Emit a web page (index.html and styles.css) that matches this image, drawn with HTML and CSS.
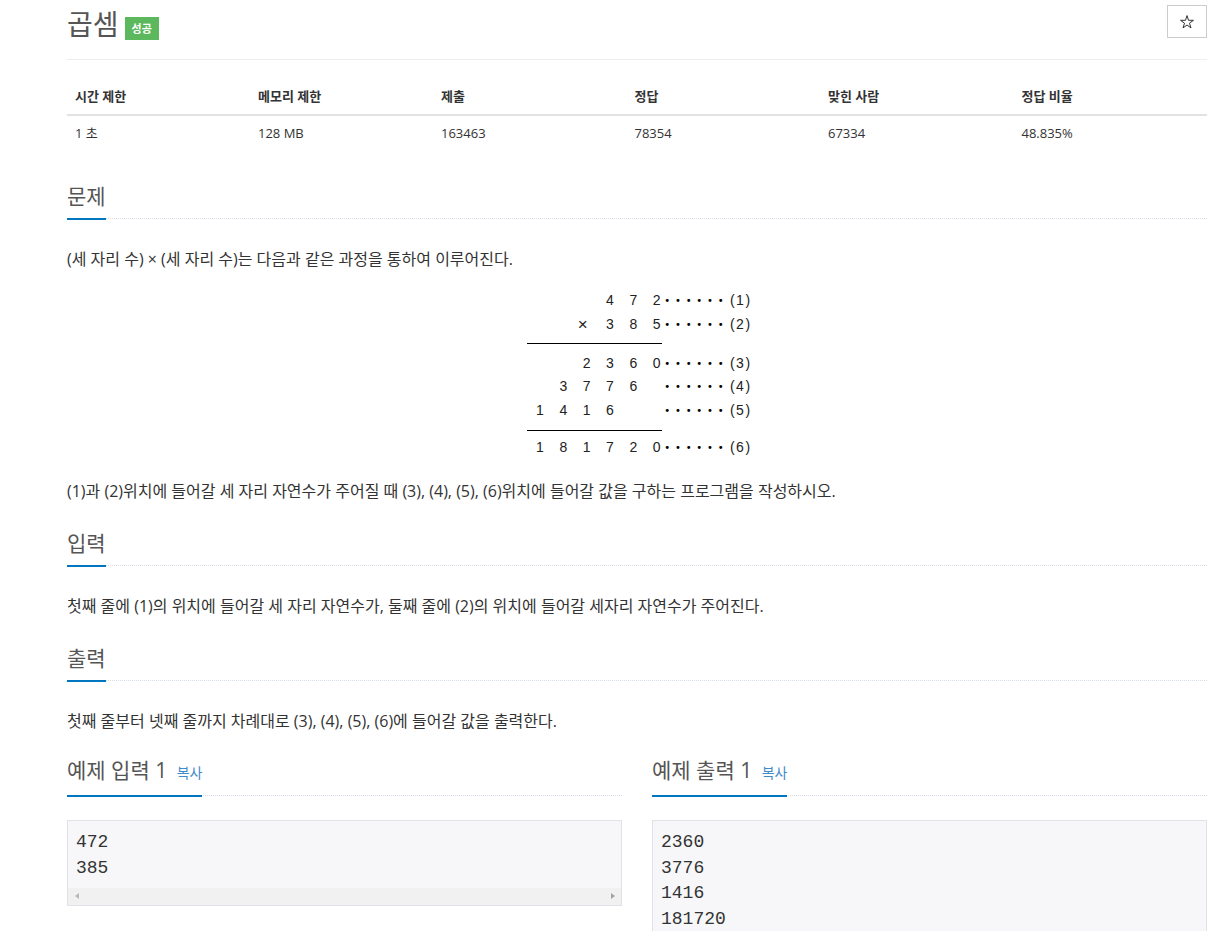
FILE: index.html
```html
<!DOCTYPE html>
<html lang="ko">
<head>
  <meta charset="UTF-8">
  <title>곱셈</title>
  <meta name="viewport" content="width=device-width, initial-scale=1.0" />
  <link rel="stylesheet" href="styles.css">
</head>
<body>
  <div class="container">
    <div class="page-header">
      <h1><span class="problem-title">곱셈</span><span class="label-success">성공</span></h1>
      <button class="star-btn" title="즐겨찾기">
        <svg width="14" height="14" viewBox="0 0 14 14"><polygon points="7,0.6 8.53,5.3 13.47,5.3 9.47,8.2 11,12.9 7,10 3,12.9 4.53,8.2 0.53,5.3 5.47,5.3" fill="none" stroke="#333" stroke-width="1" stroke-linejoin="miter"/></svg>
      </button>
    </div>

    <table class="problem-info">
      <thead>
        <tr>
          <th>시간 제한</th>
          <th>메모리 제한</th>
          <th>제출</th>
          <th>정답</th>
          <th>맞힌 사람</th>
          <th>정답 비율</th>
        </tr>
      </thead>
      <tbody>
        <tr>
          <td>1 초</td>
          <td>128 MB</td>
          <td>163463</td>
          <td>78354</td>
          <td>67334</td>
          <td>48.835%</td>
        </tr>
      </tbody>
    </table>

    <section class="problem-section">
      <div class="headline"><h2>문제</h2></div>
      <div class="problem-text">
        <p>(세 자리 수) × (세 자리 수)는 다음과 같은 과정을 통하여 이루어진다.</p>
        <!-- 곱셈 과정 그림 -->
        <div class="calc">
          <div class="calc-row"><span></span><span></span><span></span><span>4</span><span>7</span><span>2</span><span class="dots">••••••</span><span class="tag">(1)</span></div>
          <div class="calc-row"><span></span><span></span><span class="times">×</span><span>3</span><span>8</span><span>5</span><span class="dots">••••••</span><span class="tag">(2)</span></div>
          <div class="calc-rule first"></div>
          <div class="calc-row"><span></span><span></span><span>2</span><span>3</span><span>6</span><span>0</span><span class="dots">••••••</span><span class="tag">(3)</span></div>
          <div class="calc-row"><span></span><span>3</span><span>7</span><span>7</span><span>6</span><span></span><span class="dots">••••••</span><span class="tag">(4)</span></div>
          <div class="calc-row"><span>1</span><span>4</span><span>1</span><span>6</span><span></span><span></span><span class="dots">••••••</span><span class="tag">(5)</span></div>
          <div class="calc-rule second"></div>
          <div class="calc-row"><span>1</span><span>8</span><span>1</span><span>7</span><span>2</span><span>0</span><span class="dots">••••••</span><span class="tag">(6)</span></div>
        </div>
        <p>(1)과 (2)위치에 들어갈 세 자리 자연수가 주어질 때 (3), (4), (5), (6)위치에 들어갈 값을 구하는 프로그램을 작성하시오.</p>
      </div>
    </section>

    <section class="problem-section">
      <div class="headline"><h2>입력</h2></div>
      <div class="problem-text">
        <p>첫째 줄에 (1)의 위치에 들어갈 세 자리 자연수가, 둘째 줄에 (2)의 위치에 들어갈 세자리 자연수가 주어진다.</p>
      </div>
    </section>

    <section class="problem-section">
      <div class="headline"><h2>출력</h2></div>
      <div class="problem-text">
        <p>첫째 줄부터 넷째 줄까지 차례대로 (3), (4), (5), (6)에 들어갈 값을 출력한다.</p>
      </div>
    </section>

    <div class="samples">
      <section>
        <div class="headline"><h2>예제 입력 1 <a href="#" class="copy-button">복사</a></h2></div>
        <div class="sampledata">
          <pre>472
385</pre>
          <div class="hscroll"><span class="arrow arrow-left"></span><span class="arrow arrow-right"></span></div>
        </div>
      </section>
      <section>
        <div class="headline"><h2>예제 출력 1 <a href="#" class="copy-button">복사</a></h2></div>
        <div class="sampledata">
          <pre>2360
3776
1416
181720</pre>
          <div class="hscroll"><span class="arrow arrow-left"></span><span class="arrow arrow-right"></span></div>
        </div>
      </section>
    </div>
  </div>
</body>
</html>
```

FILE: styles.css
```css
body {
  margin: 0;
  font-family: "Open Sans", "Noto Sans CJK KR", sans-serif;
  color: #333;
  background: #fff;
}
.container {
  width: 1140px;
  margin-left: 67px;
}
/* 제목 */
.page-header {
  display: flex;
  justify-content: space-between;
  align-items: flex-start;
  padding-bottom: 11px;
  border-bottom: 1px solid #eee;
}
.page-header h1 {
  display: flex;
  align-items: center;
  gap: 6px;
  margin: 0;
  height: 48px;
  font-size: 28px;
  font-weight: normal;
  line-height: 48px;
  color: #555;
}
.label-success {
  margin-top: 9px;
  padding: 0 7px;
  background: #5cb85c;
  color: #fff;
  font-size: 11px;
  font-weight: bold;
  line-height: 23px;
}
.star-btn {
  margin-top: 5px;
  width: 40px;
  height: 33px;
  padding: 0;
  border: 1px solid #ccc;
  background: #fff;
  display: flex;
  align-items: center;
  justify-content: center;
  cursor: pointer;
}
/* 정보 표 */
.problem-info {
  width: 100%;
  table-layout: fixed;
  border-collapse: collapse;
  margin: 19px 0 21px;
  font-size: 13px;
  line-height: 18.57px;
}
.problem-info th,
.problem-info td {
  padding: 8px;
  text-align: left;
}
.problem-info th {
  width: 17%;
  font-weight: bold;
  border-bottom: 2px solid #e2e2e2;
}
.problem-info th:nth-child(1),
.problem-info th:nth-child(2) {
  width: 16%;
}
/* 섹션 */
.problem-section {
  padding-top: 10px;
}
.headline {
  margin: 0 0 25px;
  border-bottom: 1px dotted #d5dde8;
}
.headline h2 {
  display: inline-block;
  margin: 0 0 -2px;
  padding-bottom: 7px;
  border-bottom: 2px solid #0076c0;
  font-size: 21px;
  font-weight: normal;
  line-height: 30px;
  color: #555;
}
.copy-button {
  margin-left: 4px;
  font-size: 14px;
  color: #428bca;
  text-decoration: none;
}
.problem-text {
  font-size: 16px;
  line-height: 30px;
}
.problem-text p {
  margin: 0 0 12px;
}
/* 곱셈 그림 */
.calc {
  width: 232px;
  margin: 0 auto 17px;
  padding-top: 3px;
  font-family: "Liberation Sans", sans-serif;
  font-size: 14px;
  color: #222;
}
.calc-row {
  display: grid;
  grid-template-columns: repeat(6, 23.33px) 61.7px auto;
  align-items: center;
  height: 23.4px;
  line-height: 23.4px;
  padding-left: 7.3px;
}
.calc-row span {
  text-align: center;
}
.calc-row .times {
  font-size: 17px;
  margin-left: -8px;
}
.calc-row .dots {
  text-align: left;
  margin-left: -4px;
  font-family: "DejaVu Sans", sans-serif;
  font-size: 10px;
  letter-spacing: 4.8px;
  color: #000;
}
.calc-row .tag {
  text-align: left;
  letter-spacing: 1.5px;
}
.calc-rule {
  width: 135px;
  margin-left: 5.7px;
  border-top: 1px solid #000;
}
.calc-rule.first {
  margin-top: 7px;
  margin-bottom: 8px;
}
.calc-rule.second {
  margin-top: 7.5px;
  margin-bottom: 5.5px;
}
/* 예제 */
.samples {
  display: grid;
  grid-template-columns: 1fr 1fr;
  gap: 30px;
  padding-top: 7px;
}
.samples .headline {
  margin-bottom: 24px;
}
.sampledata {
  border: 1px solid #e1e1e8;
  background: #f7f7f9;
}
.sampledata pre {
  margin: 0;
  padding: 9px 8px 6.5px;
  font-family: "Liberation Mono", monospace;
  font-size: 18px;
  line-height: 25.5px;
  color: #333;
}
.hscroll {
  display: flex;
  justify-content: space-between;
  height: 17px;
  background: #f1f1f1;
}
.arrow {
  width: 17px;
  height: 17px;
  display: flex;
  align-items: center;
  justify-content: center;
}
.arrow::before {
  content: "";
  border-top: 3.5px solid transparent;
  border-bottom: 3.5px solid transparent;
}
.arrow-left::before {
  border-right: 4px solid #b8b8b8;
}
.arrow-right::before {
  border-left: 4px solid #a3a3a3;
}
```
